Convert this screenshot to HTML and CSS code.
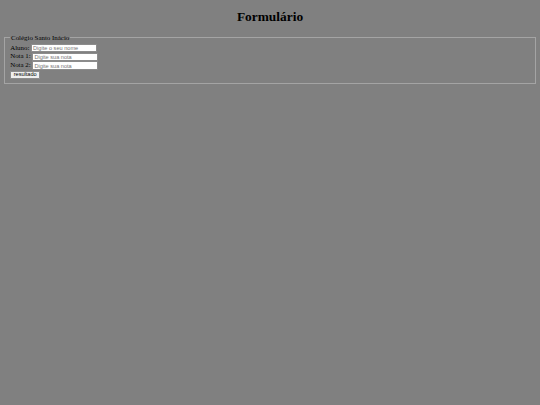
FILE: index.html
```html
<!DOCTYPE html>
<html lang="pt-BR">
<head>
<meta charset="utf-8">
<title>Formulário</title>
<link rel="stylesheet" href="styles.css">
</head>
<body class="page">
<h1 class="title">Formulário</h1>
<form class="form">
  <fieldset class="box">
    <legend class="box-legend">Colégio Santo Inácio</legend>
    <label class="field-label" for="aluno">Aluno:</label> <input class="field" id="aluno" type="text" placeholder="Digite o seu nome"><br>
    <label class="field-label" for="n1">Nota 1:</label> <input class="field" id="n1" type="text" placeholder="Digite sua nota"><br>
    <label class="field-label" for="n2">Nota 2:</label> <input class="field" id="n2" type="text" placeholder="Digite sua nota"><br>
    <button class="btn" type="button">resultado</button>
  </fieldset>
</form>
</body>
</html>
```
FILE: styles.css
```css
.page {
  margin: 3.4px;
  background: #808080;
  font-family: "Liberation Serif", "Times New Roman", serif;
  font-size: 6.9px;
  color: #000;
}
.title {
  font-size: 13.4px;
  font-weight: bold;
  text-align: center;
  margin: 6px 0 9px;
}
.form {
  margin: 0;
}
.box {
  margin: 0 0.8px;
  padding: 2.3px 5px 4.2px;
  border: 1px solid #a4a4a4;
}
.box-legend {
  padding: 0 0.9px;
}
.field-label {
  font-size: 6.9px;
}
.field {
  box-sizing: border-box;
  width: 66px;
  height: 8.4px;
  font-family: "Liberation Sans", Arial, sans-serif;
  font-size: 5.6px;
  padding: 0 1px;
  border: 1px solid #8c8c8c;
  border-radius: 0;
  background: #fff;
  vertical-align: baseline;
  margin: 0.2px 0;
}
.field::placeholder {
  color: #757575;
}
.btn {
  box-sizing: border-box;
  height: 8.4px;
  padding: 0 2.5px;
  font-family: "Liberation Sans", Arial, sans-serif;
  font-size: 5.6px;
  line-height: 1;
  background: #efefef;
  border: 1px solid #8c8c8c;
  border-radius: 1px;
  color: #000;
  margin: 0;
}
```
